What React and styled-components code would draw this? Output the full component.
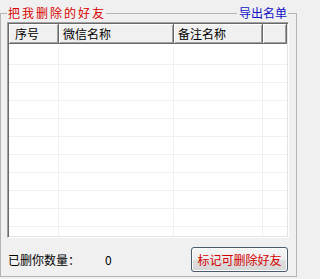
import React from 'react';
import styled, { createGlobalStyle } from 'styled-components';

const GlobalStyle = createGlobalStyle`
  html, body {
    margin: 0;
    padding: 0;
    background: #f0f0f0;
  }
  body {
    font-family: "Noto Sans CJK SC", "Liberation Sans", sans-serif;
    font-size: 12px;
  }
`;

const Page = styled.div`
  width: 298px;
  height: 279px;
  padding-top: 13px;
  box-sizing: border-box;
  background: #f0f0f0;
`;

const GroupBox = styled.div`
  position: relative;
  width: 297px;
  height: 264px;
  box-sizing: border-box;
  border: 1px solid #b4b4b4;
  padding: 8px 7px 4px 6px;
  display: flex;
  flex-direction: column;
`;

const Caption = styled.div`
  position: absolute;
  top: -9px;
  left: 6px;
  right: 8px;
  height: 16px;
  display: flex;
  align-items: center;
  justify-content: space-between;
  line-height: 16px;
`;

const CaptionText = styled.span`
  background: #f0f0f0;
  color: ${(p) => p.$color};
  letter-spacing: ${(p) => p.$spacing || 0}px;
  padding: ${(p) => p.$pad || '0'};
  white-space: nowrap;
`;

const ListView = styled.div`
  width: 282px;
  height: 216px;
  box-sizing: border-box;
  border-top: 1px solid #a0a0a0;
  border-left: 1px solid #a0a0a0;
  border-right: 1px solid #ffffff;
  border-bottom: 1px solid #ffffff;
  box-shadow: inset 1px 1px 0 #696969, inset -1px -1px 0 #e3e3e3;
  padding: 1px;
  background: #ffffff;
  overflow: hidden;
`;

const HeaderRow = styled.div`
  display: flex;
  height: 20px;
  background: #f0f0f0;
`;

const HeaderCell = styled.div`
  width: ${(p) => (p.$w ? `${p.$w}px` : 'auto')};
  flex: ${(p) => (p.$w ? 'none' : '1')};
  box-sizing: border-box;
  border-right: 1px solid #696969;
  border-bottom: 1px solid #696969;
  box-shadow: inset 1px 1px 0 #ffffff, inset -1px -1px 0 #a0a0a0;
  padding-left: ${(p) => p.$pad || 4}px;
  line-height: 19px;
  color: #000;
  white-space: nowrap;
`;

const Body = styled.div`
  padding-top: 3px;
`;

const Row = styled.div`
  display: flex;
  height: 18px;
  box-sizing: border-box;
  border-bottom: 1px solid #f0f0f0;
`;

const Cell = styled.div`
  width: ${(p) => (p.$w ? `${p.$w}px` : 'auto')};
  flex: ${(p) => (p.$w ? 'none' : '1')};
  box-sizing: border-box;
  border-right: ${(p) => (p.$last ? 'none' : '1px solid #f0f0f0')};
`;

const Footer = styled.div`
  width: 282px;
  margin-top: 9px;
  height: 25px;
  display: flex;
  align-items: center;
  padding: 0 1px;
  box-sizing: border-box;
`;

const Label = styled.span`
  color: #000;
  width: 97px;
  white-space: nowrap;
`;

const Count = styled.span`
  color: #000;
  flex: 1;
`;

const Button = styled.button`
  width: 97px;
  height: 25px;
  padding: 0;
  border: 1px solid #4a5a6c;
  border-radius: 3px;
  background: linear-gradient(#f6f6f6 0%, #ececec 50%, #dfdfdf 51%, #d6d6d6 100%);
  box-shadow: inset 0 0 0 1px #fcfcfc;
  color: #d40000;
  font-family: inherit;
  font-size: 12px;
  line-height: 23px;
  cursor: pointer;
`;

const columns = [
  { w: 50, title: '序号', pad: 6 },
  { w: 115, title: '微信名称' },
  { w: 89, title: '备注名称' },
  { title: '' },
];

const rows = Array.from({ length: 11 });

const App = () => {
  return (
    <>
      <GlobalStyle />
      <Page>
        <GroupBox>
          <Caption>
            <CaptionText $color="#d80000" $spacing={2} $pad="0 0 0 1px">
              把我删除的好友
            </CaptionText>
            <CaptionText $color="#1010c8" $pad="0 1px 0 2px">
              导出名单
            </CaptionText>
          </Caption>

          <ListView>
            <HeaderRow>
              {columns.map((c, i) => (
                <HeaderCell key={i} $w={c.w} $pad={c.pad}>
                  {c.title}
                </HeaderCell>
              ))}
            </HeaderRow>
            <Body>
              {rows.map((_, r) => (
                <Row key={r}>
                  {columns.map((c, i) => (
                    <Cell key={i} $w={c.w} $last={i === columns.length - 1} />
                  ))}
                </Row>
              ))}
            </Body>
          </ListView>

          <Footer>
            <Label>已删你数量：</Label>
            <Count>0</Count>
            <Button>标记可删除好友</Button>
          </Footer>
        </GroupBox>
      </Page>
    </>
  );
};

export default App;
